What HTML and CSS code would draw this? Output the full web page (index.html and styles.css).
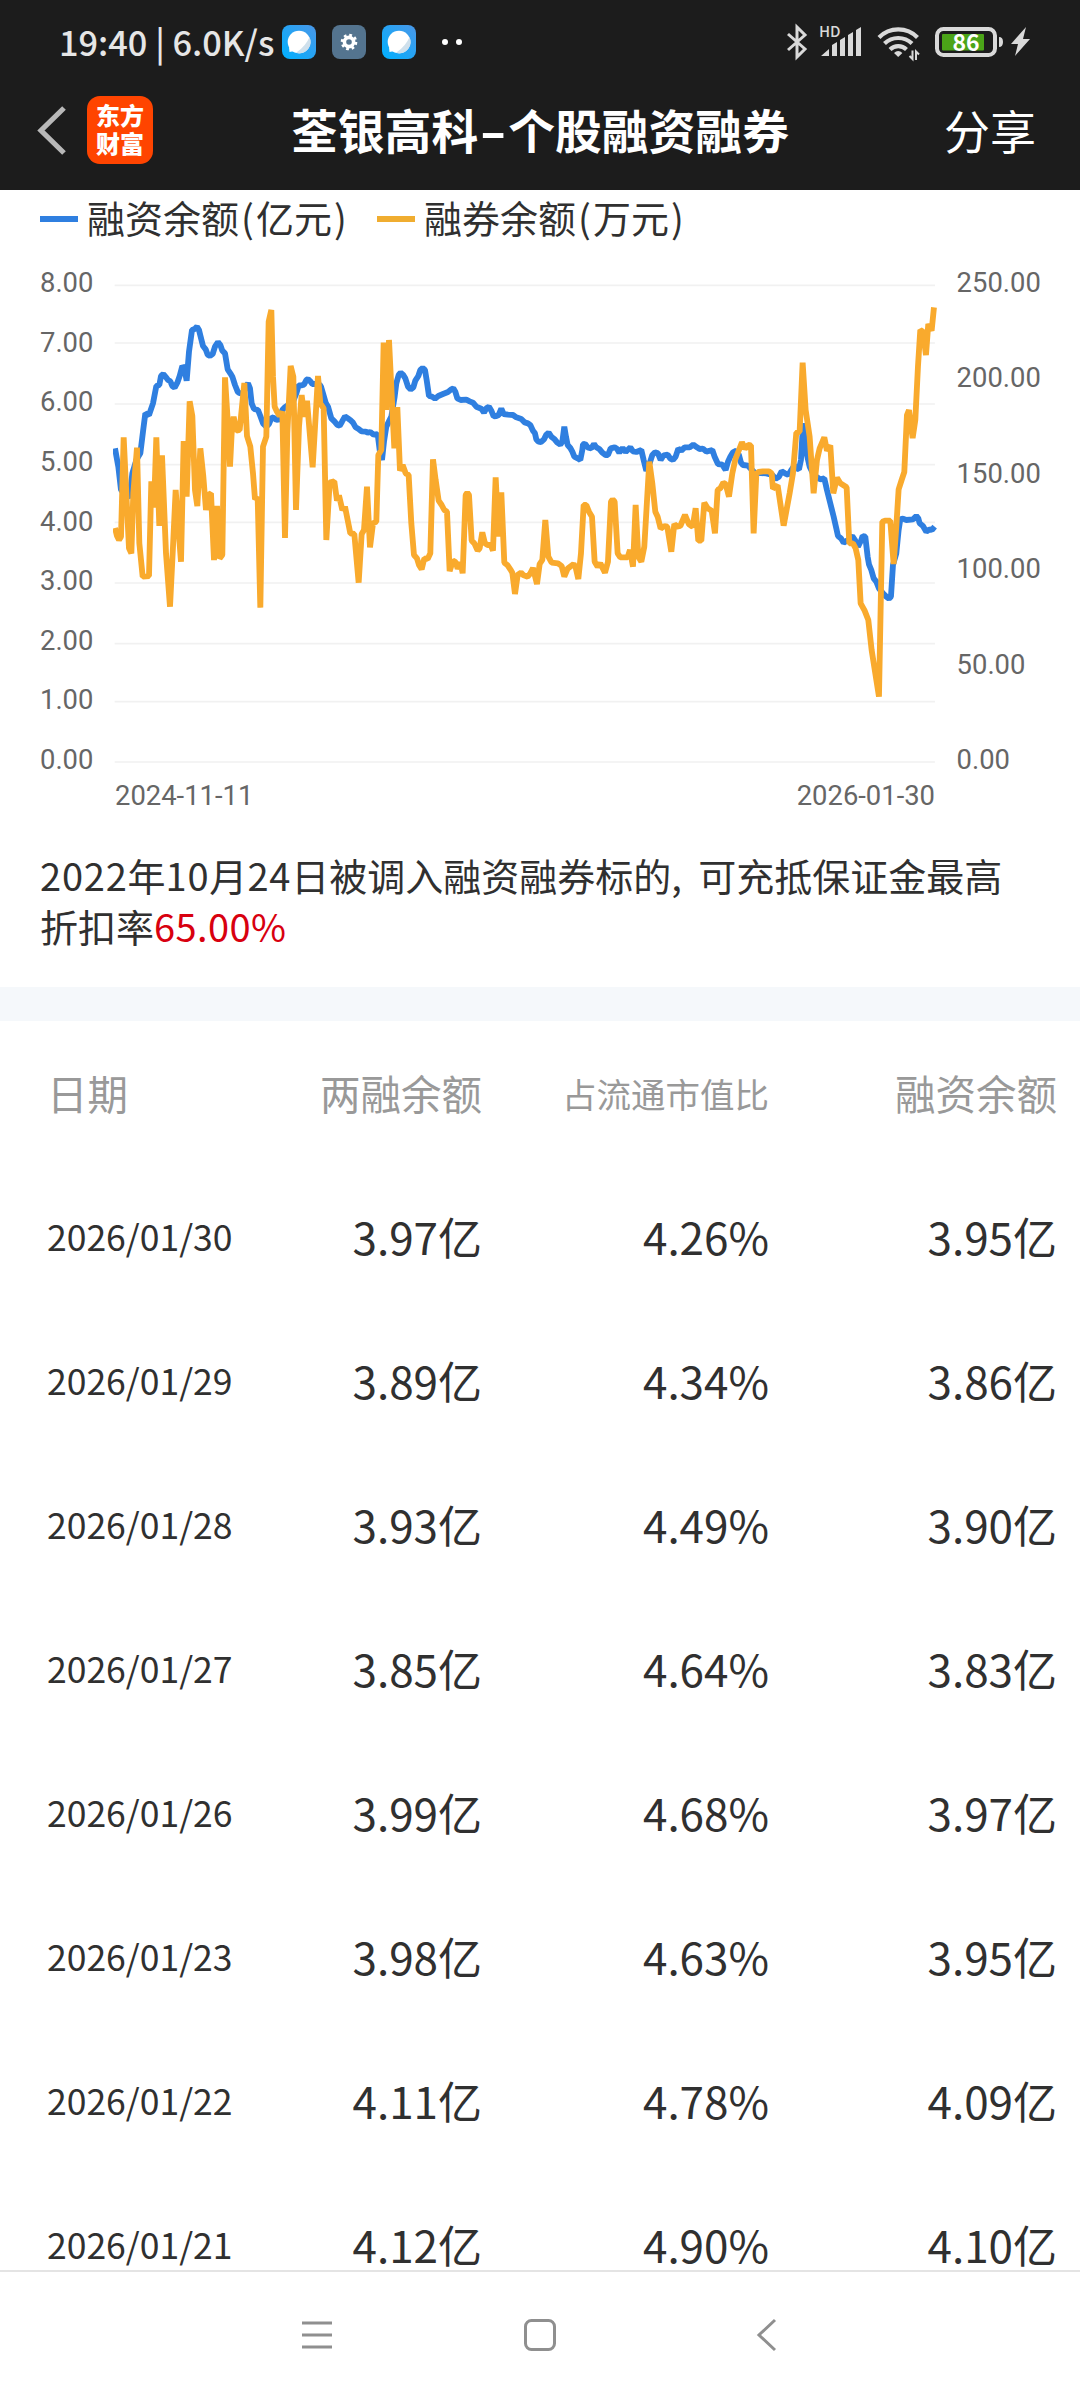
FILE: index.html
```html
<!DOCTYPE html>
<html lang="zh-CN">
<head>
    <meta charset="utf-8">
    <title>荃银高科-个股融资融券</title>
    <link rel="stylesheet" href="styles.css">
</head>
<body>
<div class="top">
    <div class="status">
        <span class="clock">19:40 | 6.0K/s</span>
        <svg class="app-icon" viewBox="0 0 34 34">
            <defs>
                <linearGradient id="sky" x1="1" y1="0" x2="0" y2="1">
                    <stop offset="0" stop-color="#4a97e8"/>
                    <stop offset="1" stop-color="#00b0ff"/>
                </linearGradient>
            </defs>
            <rect width="34" height="34" rx="8" fill="url(#sky)"/>
            <circle cx="17" cy="17" r="11.3" fill="#fff"/>
            <path d="M27.500 12 Q24 21 14 27.800 A11.3 11.3 0 0 0 27.500 12z" fill="#cfe0ec"/>
            <path d="M7 22 L7.500 27 L12.500 26z" fill="#fff"/>
        </svg>
        <svg class="app-icon" viewBox="0 0 34 34">
            <rect width="34" height="34" rx="8" fill="#54748f"/>
            <circle cx="17" cy="17" r="4.6" fill="none" stroke="#fff" stroke-width="3.6"/>
            <circle cx="17" cy="17" r="7" fill="none" stroke="#fff" stroke-width="2.6" stroke-dasharray="2.75 2.75"/>
        </svg>
        <svg class="app-icon" viewBox="0 0 34 34">
            <rect width="34" height="34" rx="8" fill="url(#sky)"/>
            <circle cx="17" cy="17" r="11.3" fill="#fff"/>
            <path d="M27.500 12 Q24 21 14 27.800 A11.3 11.3 0 0 0 27.500 12z" fill="#cfe0ec"/>
            <path d="M7 22 L7.500 27 L12.500 26z" fill="#fff"/>
        </svg>
        <span class="dots"><i></i><i></i></span>
        <svg class="signals" viewBox="0 0 250 40" fill="#d9d9d9">
            <path d="M2 12 L19 27 L11 35 V5 L19 13 L2 28" fill="none" stroke="#d9d9d9" stroke-width="3"/>
            <text x="33" y="15" class="hd">HD</text>
            <path d="M35 34 L43 27 V34z M46 23 L51 20 V34 H46z M54 18 L59 15 V34 H54z M62 13 L67 10 V34 H62z M70 8 L75 5 V34 H70z"/>
            <g fill="none" stroke="#d9d9d9" stroke-width="4.200">
                <path d="M93 15.500 A27 27 0 0 1 131.500 15.500"/>
                <path d="M98.500 21.500 A20 20 0 0 1 126 21.500"/>
                <path d="M104 27.500 A12 12 0 0 1 120.500 27.500"/>
            </g>
            <path d="M112.200 35 L108 31 Q112.200 27 116.400 31z"/>
            <path d="M126.500 28.500 V37 L123.500 34 M130 38 V29.500 L133 32.500" fill="none" stroke="#d9d9d9" stroke-width="2"/>
            <rect x="151" y="7" width="58" height="26" rx="6.500" fill="none" stroke="#d9d9d9" stroke-width="4"/>
            <rect x="156" y="12" width="42" height="16.500" rx="1" fill="#4ba418"/>
            <text x="166.500" y="28.500" class="charge">86</text>
            <path d="M213 15 Q217 15 217 20 Q217 25 213 25z"/>
            <path d="M240 5 L225 22 H232 L229 34 L244 17 H237z"/>
        </svg>
    </div>
    <div class="titlebar">
        <svg class="back" viewBox="0 0 30 52"><path d="M27 4 L4 26.500 L27 49" fill="none" stroke="#b8b8b8" stroke-width="5.200"/></svg>
        <div class="logo">东方<br>财富</div>
        <h1>荃银高科<span class="dash">-</span>个股融资融券</h1>
        <span class="share">分享</span>
    </div>
</div>

<div class="legend">
    <span class="key blue"></span><span class="name">融资余额<b>(</b>亿元<b>)</b></span>
    <span class="key orange"></span><span class="name">融券余额<b>(</b>万元<b>)</b></span>
</div>

<div class="chart">
    <div class="axis left">
        <span>8.00</span><span>7.00</span><span>6.00</span><span>5.00</span><span>4.00</span><span>3.00</span><span>2.00</span><span>1.00</span><span>0.00</span>
    </div>
    <!-- plot units are a third of a pixel -->
    <svg class="plot" viewBox="40 0 2470 1560">
        <path class="grid" d="M45 76H2506 M45 249H2506 M45 432H2506 M45 614H2506 M45 787H2506 M45 969H2506 M45 1151H2506 M45 1325H2506 M45 1506H2506"/>
        <polyline class="line blue-line" points="
            46,565 56,620 64,690 76,700 90,713 98,640 110,600 122,580 130,515 137,460 148,465 160,430 170,378 179,375 184,348 191,342 199,352 205,360 212,364 218,378 225,383 233,368 240,348 248,318 254,325 261,362
            268,275 277,210 285,207 292,200 298,210 303,230 310,258 318,268 324,284 331,288 339,282 346,260 355,246 362,255 368,272 376,280 384,328 392,340 398,350 406,375 414,395 420,400 432,398 438,380 445,370 451,385
            456,430 463,447 475,450 482,468 490,490 500,500 508,492 516,472 524,474 530,480 540,478 548,450 555,442 580,425 590,400 597,376 605,376 613,374 620,360 625,357 632,364 638,372 645,372 660,374
            664,380 670,400 678,428 685,440 695,475 705,485 713,495 720,497 727,485 736,469 745,475 752,480 760,488 768,502 778,508 786,514 798,515 804,518 812,516 822,524 834,522 840,570 847,600 853,545 860,500 866,488
            875,470 885,410 890,370 897,345 903,338 910,344 917,355 925,380 933,388 941,382 947,362 956,348 962,330 969,324 976,330 981,360 988,408 997,410 1006,416 1016,408 1030,402 1045,396 1055,388 1061,385 1067,395 1073,415
            1083,420 1100,419 1110,424 1120,428 1130,440 1145,446 1153,458 1160,445 1168,440 1175,452 1182,469 1190,468 1197,465 1205,446 1212,462 1225,464 1240,465 1250,472 1265,477 1275,487 1285,490
            1292,495 1300,512 1306,520 1310,538 1316,545 1324,546 1333,538 1340,524 1347,518 1355,530 1365,538 1373,548 1382,554 1388,545 1394,500 1399,530 1404,555 1412,564 1418,575 1424,590 1434,595 1442,600 1448,570 1450,553
            1456,551 1464,562 1475,565 1483,552 1490,562 1500,568 1508,578 1518,585 1525,585 1533,565 1545,562 1552,566 1559,578 1569,564 1578,576 1592,562 1600,574 1610,576 1625,570 1632,600 1640,632 1650,610 1658,585 1666,577
            1675,580 1683,600 1692,586 1704,584 1712,596 1720,600 1728,590 1736,566 1745,572 1755,562 1770,562 1781,554 1792,562 1800,567 1810,566 1820,575 1838,570 1845,590 1855,612 1868,614 1878,630 1885,605 1892,590 1900,577
            1910,572 1918,585 1924,608 1930,615 1945,617 1955,628 1965,638 2000,640 2018,645 2028,656 2038,650 2046,634 2056,640 2066,645 2075,630 2085,615 2090,625 2098,628 2104,600 2108,530 2112,490 2118,540 2122,585 2130,620
            2140,640 2150,650 2162,658 2174,655 2182,690 2192,730 2202,770 2210,805 2215,828 2224,835 2232,848 2245,840 2258,828 2266,840 2275,860 2285,840 2289,828 2297,830 2304,890 2308,913 2315,930 2322,955 2330,965 2338,985
            2350,1000 2360,1010 2368,1016 2374,1010 2380,915 2390,880 2397,810 2402,778 2410,776 2420,780 2440,778 2450,768 2456,775 2460,790 2470,798 2480,815 2490,808 2497,810 2505,800"/>
        <polyline class="line orange-line" points="
            46,804 52,828 58,840 64,830 72,532 80,700 88,865 95,880 101,700 112,563 119,850 129,950 148,948 155,664 163,742 170,532 179,798 187,586 199,880 211,1040 220,860 228,690 236,800 244,905 252,543 261,710 270,424
            278,468 286,690 293,738 302,565 311,650 319,750 325,705 334,700 343,900 352,738 360,895 368,885 376,352 384,480 391,620 397,500 402,470 410,512 420,510 434,369 442,528 452,560 460,640 466,718 474,712 482,1043
            490,560 500,530 507,185 515,150 520,350 525,440 532,455 540,468 548,455 556,834 563,520 573,318 581,350 589,750 598,500 606,405 614,470 622,422 639,622 655,348 662,430 672,445 680,840
            690,668 704,664 712,722 718,706 728,750 736,740 744,780 752,820 764,822 777,968 786,822 793,810 802,680 811,862 820,790 830,785 836,585 845,570 852,248 860,450 868,240 884,565 893,441 901,632 909,615 918,640 927,645
            935,790 943,885 952,895 958,915 966,928 974,895 984,897 992,880 1000,598 1008,660 1017,722 1026,735 1034,750 1042,755 1050,933 1060,902 1068,906 1074,926 1083,908 1089,940 1098,705 1103,698 1108,705 1116,842
            1124,850 1134,872 1140,865 1148,817 1156,850 1164,855 1173,855 1180,872 1188,652 1197,830 1205,697 1214,908 1224,916 1232,928 1238,938 1246,1002 1254,945 1264,938 1272,946 1284,950
            1292,940 1300,924 1312,972 1320,912 1328,900 1337,780 1346,890 1356,908 1375,910 1386,918 1394,950 1404,926 1422,912 1428,922 1436,957 1444,880 1452,735 1460,735 1468,755 1477,770 1485,905 1494,920 1502,910 1516,938
            1525,905 1534,725 1539,718 1545,725 1554,880 1562,892 1584,892 1591,870 1600,920 1608,735 1616,890 1625,905 1634,860 1649,605 1658,670 1667,755 1674,770 1683,806 1694,798 1703,800 1715,875 1724,792 1732,800 1742,798
            1756,765 1768,793 1779,800 1788,745 1796,842 1805,842 1814,728 1824,745 1836,752 1846,820 1854,690 1862,685 1871,668 1878,672 1888,710 1898,640 1907,598 1918,570 1927,547 1936,566 1946,555 1954,556 1962,820
            1970,642 1976,636 1990,634 2008,634 2016,640 2020,686 2034,676 2052,797 2070,700 2080,640 2090,518 2100,515 2109,308 2118,450 2130,530 2142,700 2152,600 2160,565 2174,532 2182,572 2192,556 2201,700 2212,653 2222,670
            2241,682 2249,850 2260,850 2268,865 2276,900 2283,1030 2295,1052 2306,1080 2316,1170 2338,1310 2348,785 2356,782 2372,782 2382,912 2390,800 2397,688 2406,660 2414,636 2422,465 2428,450 2439,534 2447,480 2455,320
            2462,210 2470,215 2479,285 2486,192 2496,212 2503,142"/>
    </svg>
    <div class="axis right">
        <span>250.00</span><span>200.00</span><span>150.00</span><span>100.00</span><span>50.00</span><span>0.00</span>
    </div>
</div>
<div class="dates"><span>2024-11-11</span><span>2026-01-30</span></div>

<p class="note"><span class="num">2022</span>年<span class="num">10</span>月<span class="num">24</span>日被调入融资融券标的<span class="comma">,</span>可充抵保证金最高<br>折扣率<span class="rate">65.00%</span></p>

<div class="detail-wrap">
<table class="detail">
    <tr><th>日期</th><th>两融余额</th><th class="small">占流通市值比</th><th>融资余额</th></tr>
    <tr><td>2026/01/30</td><td>3.97亿</td><td>4.26%</td><td>3.95亿</td></tr>
    <tr><td>2026/01/29</td><td>3.89亿</td><td>4.34%</td><td>3.86亿</td></tr>
    <tr><td>2026/01/28</td><td>3.93亿</td><td>4.49%</td><td>3.90亿</td></tr>
    <tr><td>2026/01/27</td><td>3.85亿</td><td>4.64%</td><td>3.83亿</td></tr>
    <tr><td>2026/01/26</td><td>3.99亿</td><td>4.68%</td><td>3.97亿</td></tr>
    <tr><td>2026/01/23</td><td>3.98亿</td><td>4.63%</td><td>3.95亿</td></tr>
    <tr><td>2026/01/22</td><td>4.11亿</td><td>4.78%</td><td>4.09亿</td></tr>
    <tr><td>2026/01/21</td><td>4.12亿</td><td>4.90%</td><td>4.10亿</td></tr>
</table>
</div>

<div class="navbar">
    <svg viewBox="0 0 36 36"><path d="M3 6H33 M3 18H33 M3 30H33"/></svg>
    <svg viewBox="0 0 36 36"><rect x="3.500" y="3.500" width="29" height="29" rx="6"/></svg>
    <svg viewBox="0 0 36 36"><path d="M30 3 L14 18 L30 33"/></svg>
</div>
</body>
</html>
```

FILE: styles.css
```css
* {
    box-sizing: border-box;
}

body {
    margin: 0;
    width: 1080px;
    height: 2400px;
    overflow: hidden;
    display: flex;
    flex-direction: column;
    background: #fff;
    color: #303030;
    font-family: "Noto Sans CJK SC", sans-serif;
}

.top {
    height: 190px;
    flex: none;
    background: #1c1c1c;
    color: #fff;
}

.status {
    height: 84px;
    padding-left: 59px;
    display: flex;
    align-items: center;
}

.clock {
    width: 223px;
    font-size: 34.300px;
    font-weight: 500;
    line-height: 40px;
    padding-bottom: 2px;
    color: #e6e6e6;
    white-space: nowrap;
}

.app-icon {
    width: 34px;
    height: 34px;
    margin-right: 16px;
}

.dots {
    display: flex;
    gap: 8px;
    margin-left: 10px;
}

.dots i {
    width: 6px;
    height: 6px;
    border-radius: 3px;
    background: #fff;
}

.signals {
    width: 250px;
    height: 40px;
    margin-left: auto;
    margin-right: 44px;
}

.hd {
    font: 500 15px "Noto Sans CJK SC", sans-serif;
}

.charge {
    font: 700 23px "Noto Sans CJK SC", sans-serif;
    fill: #fff;
}

.titlebar {
    height: 92px;
    display: flex;
    align-items: center;
    padding: 0 44px 0 37px;
}

.back {
    width: 30px;
    height: 52px;
    margin-right: 20px;
}

.logo {
    width: 66px;
    height: 68px;
    border-radius: 13px;
    background: #ff4400;
    font-size: 24px;
    font-weight: 900;
    line-height: 28px;
    padding-top: 5px;
    text-align: center;
}

h1 {
    flex: 1;
    margin: 0 0 2px 138px;
    font-size: 46.800px;
    font-weight: 700;
    line-height: 60px;
    white-space: nowrap;
}

.dash {
    display: inline-block;
    width: 30px;
    text-align: center;
    transform: scaleX(1.600);
}

.share {
    font-size: 46px;
    line-height: 60px;
    margin-bottom: 2px;
}

.legend {
    height: 70px;
    flex: none;
    padding: 0 0 12px 40px;
    display: flex;
    align-items: center;
    font-size: 38px;
    line-height: 50px;
}

.key {
    width: 38px;
    height: 6px;
    margin-right: 9px;
}

.blue {
    background: #2f7fe0;
}

.orange {
    background: #f0ad30;
}

.name {
    width: 290px;
    padding-bottom: 4px;
}

.name b {
    font-weight: 400;
    margin: 0 2px;
}

.chart {
    height: 520px;
    flex: none;
    display: flex;
    padding-left: 40px;
}

.axis {
    height: 520px;
    display: flex;
    flex-direction: column;
    justify-content: space-between;
    padding: 7px 0 4px;
    font: 27.400px/32px Roboto, sans-serif;
    color: #666;
}

.left {
    width: 73.300px;
}

.right {
    padding-left: 20px;
}

.plot {
    width: 823.300px;
    height: 520px;
}

.grid {
    stroke: #f1f1f1;
    stroke-width: 5;
}

.line {
    fill: none;
    stroke-width: 17.500;
    stroke-linejoin: bevel;
}

.blue-line {
    stroke: #2f7fe0;
}

.orange-line {
    stroke: #f9aa2d;
}

.dates {
    flex: none;
    height: 30px;
    padding: 1px 145px 0 115px;
    display: flex;
    justify-content: space-between;
    font: 27.400px/30px Roboto, sans-serif;
    color: #666;
}

.note {
    flex: none;
    height: 177px;
    margin: 0;
    padding: 39px 0 0 40px;
    font-size: 38px;
    line-height: 51px;
    white-space: nowrap;
}

.num {
    letter-spacing: .8px;
}

.rate {
    letter-spacing: .4px;
    color: #d8000f;
}

.comma {
    display: inline-block;
    width: 27px;
}

.detail-wrap {
    flex: none;
    height: 1283px;
    overflow: hidden;
    border-top: 34px solid #f5f8fb;
}

.detail {
    width: 1080px;
    border-spacing: 0;
    table-layout: fixed;
}

.detail tr {
    height: 144px;
}

.detail th, .detail td {
    padding: 0;
    text-align: right;
    white-space: nowrap;
    font-size: 44px;
    line-height: 60px;
}

.detail td {
    padding-bottom: 2px;
}

.detail th {
    font-size: 40.500px;
    font-weight: 400;
    color: #999;
}

.detail th.small {
    font-size: 34.500px;
}

.detail th:first-child, .detail td:first-child {
    width: 260px;
    padding-left: 47px;
    text-align: left;
}

.detail td:first-child {
    font-size: 35.500px;
}

.detail th:nth-child(2), .detail td:nth-child(2) {
    width: 222px;
}

.detail th:nth-child(3), .detail td:nth-child(3) {
    width: 287px;
}

.detail th:last-child, .detail td:last-child {
    padding-right: 23px;
}

.navbar {
    flex: none;
    height: 130px;
    border-top: 2px solid #e4e4e4;
    display: flex;
    justify-content: center;
    gap: 187px;
    background: #fff;
    padding-top: 45px;
}

.navbar svg {
    width: 36px;
    height: 36px;
    fill: none;
    stroke: #8f8f8f;
    stroke-width: 3;
}
```
